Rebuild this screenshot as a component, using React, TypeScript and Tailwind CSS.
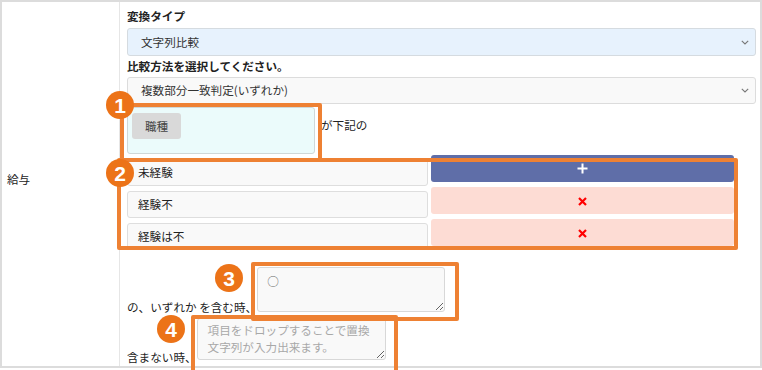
import React from "react";

const Chevron = () => (
  <svg width="8" height="5" viewBox="0 0 8 5" className="shrink-0">
    <path d="M0.8 0.8 L4 4 L7.2 0.8" fill="none" stroke="#777" strokeWidth="1.1" />
  </svg>
);

const Badge = ({ n, x, y }: { n: string; x: number; y: number }) => (
  <div
    className="absolute w-[28px] h-[28px] rounded-full bg-[#ec7318] flex items-center justify-center text-white font-bold text-[21px] leading-none font-['Liberation_Sans',sans-serif]"
    style={{ left: x - 14, top: y - 14 }}
  >
    {n}
  </div>
);

const OBox = ({ x, y, w, h }: { x: number; y: number; w: number; h: number }) => (
  <div
    className="absolute border-[4px] border-[#ee8133] rounded-[2px]"
    style={{ left: x, top: y, width: w, height: h }}
  />
);

const Row = ({ label, plus }: { label: string; plus?: boolean }) => (
  <div className="flex items-start gap-[3px] mr-[22px]">
    <div className="w-[301px] h-[27px] mt-[4px] shrink-0 bg-[#f9f9f9] border border-[#dedede] rounded-[3px] flex items-center pl-[10px]">
      {label}
    </div>
    {plus ? (
      <div className="flex-1 h-[27px] bg-[#5f6ea8] rounded-[3px] flex items-center justify-center">
        <svg width="11" height="11" viewBox="0 0 11 11">
          <path d="M5.5 0.5 V10.5 M0.5 5.5 H10.5" stroke="#fff" strokeWidth="2" />
        </svg>
      </div>
    ) : (
      <div className="flex-1 h-[27px] bg-[#fddcd4] rounded-[3px] flex items-center justify-center pt-[1px]">
        <svg width="9" height="9" viewBox="0 0 9 9">
          <path d="M1 1 L8 8 M8 1 L1 8" stroke="#ff0000" strokeWidth="2.2" />
        </svg>
      </div>
    )}
  </div>
);

export default function App() {
  return (
    <div className="relative w-[762px] h-[370px] bg-white font-['Noto_Sans_CJK_JP',sans-serif] text-[11.6px] text-[#222] overflow-hidden">
      <div className="w-[762px] h-[368px] border-2 border-[#dcdcdc] flex">
        <div className="w-[118px] shrink-0 border-r border-[#e6e6e6] pl-[5px] pt-[169px] leading-[17px]">
          給与
        </div>
        <div className="flex-1 flex flex-col pl-[7px] pr-[4px] pt-[5px] leading-[17px]">
          <div className="h-[18px] leading-[18px] font-bold">変換タイプ</div>
          <div className="mt-[3px] h-[28px] bg-[#e7f2fd] border border-[#d5dbe0] rounded-[3px] flex items-center justify-between pl-[13px] pr-[6px]">
            <span className="text-[#333]">文字列比較</span>
            <Chevron />
          </div>
          <div className="h-[18px] leading-[18px] font-bold mt-[1px]">比較方法を選択してください。</div>
          <div className="mt-[2px] h-[27px] bg-[#f9f9f9] border border-[#dcdcdc] rounded-[3px] flex items-center justify-between pl-[13px] pr-[6px]">
            <span className="text-[#333]">複数部分一致判定(いずれか)</span>
            <Chevron />
          </div>
          <div className="mt-[3px] flex items-start">
            <div className="w-[188px] h-[47px] shrink-0 bg-[#ebfbfb] border border-[#cfd8d8] rounded-[3px] pl-[4px] pt-[5px]">
              <div className="w-[49px] h-[26px] bg-[#d9d9d9] rounded-[3px] flex items-center justify-center text-[#444]">
                職種
              </div>
            </div>
            <span className="ml-[6px] mt-[10px]">が下記の</span>
          </div>
          <div className="mt-[1px] flex flex-col gap-[1px]">
            <Row label="未経験" plus />
            <Row label="経験不" />
            <Row label="経験は不" />
          </div>
          <div className="mt-[17px] flex items-end">
            <span className="mb-[-4px] whitespace-pre">の、いずれか を含む時、</span>
            <textarea
              readOnly
              defaultValue="○"
              className="w-[188px] h-[45px] shrink-0 bg-[#f9f9f9] border border-[#d8d8d8] rounded-[3px] pl-[9px] pt-[5px] leading-[17px] text-[#666] outline-none"
            />
          </div>
          <div className="mt-[6px] flex items-end">
            <span className="mb-[-6px]">含まない時、</span>
            <textarea
              readOnly
              placeholder={"項目をドロップすることで置換\n文字列が入力出来ます。"}
              className="w-[189px] h-[42px] shrink-0 bg-[#f9f9f9] border border-[#d8d8d8] rounded-[3px] pl-[10px] pt-[3px] leading-[17px] placeholder:text-[#a8a8a8] outline-none"
            />
          </div>
        </div>
      </div>

      <OBox x={120} y={103} w={202} h={59} />
      <OBox x={117} y={158} w={621} h={92} />
      <OBox x={251} y={262} w={208} h={59} />
      <OBox x={191} y={315} w={207} h={62} />

      <Badge n="1" x={120} y={105} />
      <Badge n="2" x={120} y={173} />
      <Badge n="3" x={229} y={278} />
      <Badge n="4" x={171} y={329} />
    </div>
  );
}
